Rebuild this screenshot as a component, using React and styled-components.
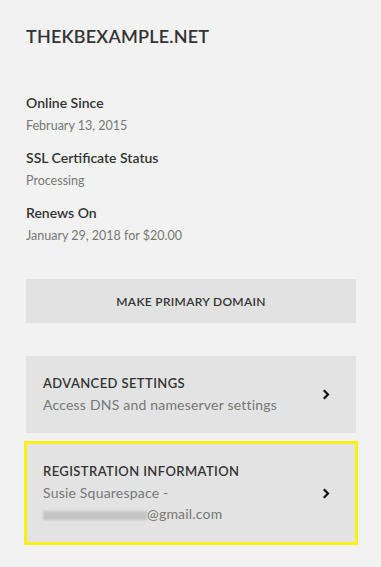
import styled, { createGlobalStyle } from "styled-components";

const GlobalStyle = createGlobalStyle`
  body {
    margin: 0;
    background: #f2f2f2;
    font-family: "Lato", "Liberation Sans", sans-serif;
    -webkit-font-smoothing: antialiased;
  }
`;

function Chevron() {
  return (
    <svg width="8" height="11" viewBox="0 0 8 11">
      <path d="M1.8 1.2 L6 5.5 L1.8 9.8" fill="none" stroke="#111" strokeWidth="2.2" />
    </svg>
  );
}

export default function App() {
  return (
    <Page>
      <GlobalStyle />
      <Title>THEKBEXAMPLE.NET</Title>
      <Details>
        <Detail>
          <Label>Online Since</Label>
          <Value>February 13, 2015</Value>
        </Detail>
        <Detail>
          <Label>SSL Certificate Status</Label>
          <Value>Processing</Value>
        </Detail>
        <Detail>
          <Label>Renews On</Label>
          <Value>January 29, 2018 for $20.00</Value>
        </Detail>
      </Details>
      <PrimaryButton>MAKE PRIMARY DOMAIN</PrimaryButton>
      <Cards>
        <Card>
          <CardText>
            <CardTitle>ADVANCED SETTINGS</CardTitle>
            <CardSub>Access DNS and nameserver settings</CardSub>
          </CardText>
          <Chevron />
        </Card>
        <Card $highlight $tall>
          <CardText>
            <CardTitle>REGISTRATION INFORMATION</CardTitle>
            <CardSub>
              Susie Squarespace -
              <br />
              <Redacted />@gmail.com
            </CardSub>
          </CardText>
          <Chevron />
        </Card>
      </Cards>
    </Page>
  );
}

const Page = styled.div`
  padding: 26px 25px 24px 26px;
  width: 330px;
`;

const Title = styled.h1`
  margin: 0;
  font-size: 18px;
  font-weight: 600;
  letter-spacing: 0.2px;
  color: #333;
  line-height: 20px;
`;

const Details = styled.div`
  margin-top: 48px;
  display: flex;
  flex-direction: column;
  gap: 15px;
`;

const Detail = styled.div`
  display: flex;
  flex-direction: column;
  gap: 7px;
`;

const Label = styled.div`
  font-size: 14px;
  font-weight: 600;
  color: #333;
  line-height: 17px;
`;

const Value = styled.div`
  font-size: 12.5px;
  color: #777;
  line-height: 16px;
`;

const PrimaryButton = styled.button`
  display: block;
  margin-top: 35px;
  width: 330px;
  height: 44px;
  border: none;
  background: #e2e2e2;
  color: #333;
  font-family: inherit;
  font-size: 12px;
  font-weight: 600;
  letter-spacing: 0.3px;
`;

const Cards = styled.div`
  margin-top: 33px;
  display: flex;
  flex-direction: column;
  gap: 10px;
`;

const Card = styled.div`
  display: flex;
  align-items: center;
  justify-content: space-between;
  height: ${(p) => (p.$tall ? "100px" : "77px")};
  box-sizing: border-box;
  padding: 0 26px 0 17px;
  background: #e3e3e3;
  outline: ${(p) => (p.$highlight ? "3px solid #f8f016" : "none")};
  outline-offset: -1px;
`;

const CardText = styled.div`
  display: flex;
  flex-direction: column;
  gap: 3px;
`;

const CardTitle = styled.div`
  font-size: 13px;
  font-weight: 600;
  letter-spacing: 0.4px;
  color: #333;
  line-height: 16px;
`;

const CardSub = styled.div`
  font-size: 14px;
  letter-spacing: 0.2px;
  color: #777;
  line-height: 21px;
`;

const Redacted = styled.span`
  display: inline-block;
  width: 104px;
  height: 9px;
  vertical-align: -1px;
  background: #c4c4c4;
  filter: blur(1.2px);
`;
